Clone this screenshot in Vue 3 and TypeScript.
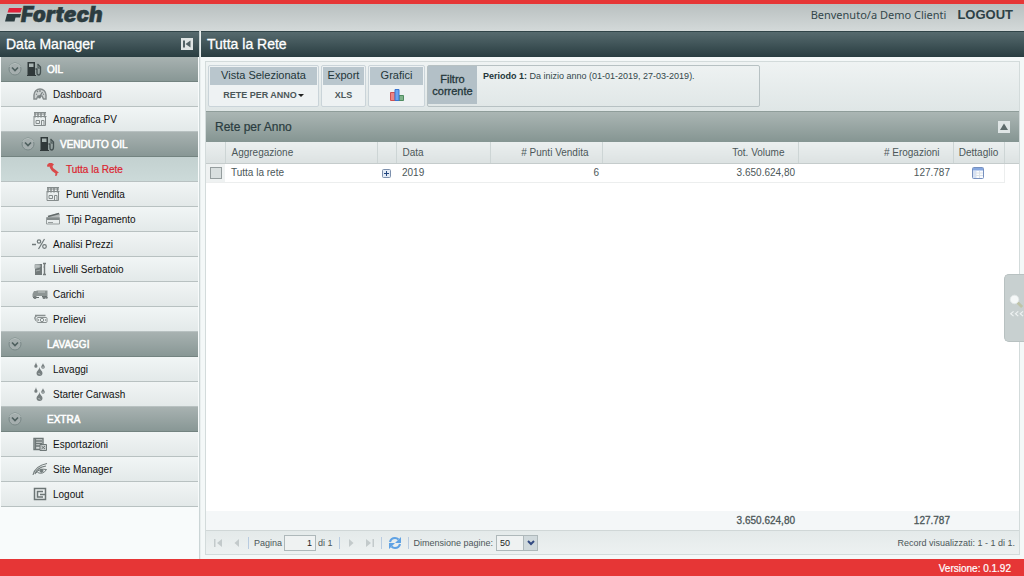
<script setup lang="ts">
import { ref } from 'vue'

interface MenuEntry {
  label: string
  icon?: string
  kind: 'group' | 'item'
  level: number
  active?: boolean
}

const menu: MenuEntry[] = [
  { label: 'OIL', icon: 'pump', kind: 'group', level: 0 },
  { label: 'Dashboard', icon: 'gauge', kind: 'item', level: 0 },
  { label: 'Anagrafica PV', icon: 'shop', kind: 'item', level: 0 },
  { label: 'VENDUTO OIL', icon: 'pump', kind: 'group', level: 1 },
  { label: 'Tutta la Rete', icon: 'italy', kind: 'item', level: 1, active: true },
  { label: 'Punti Vendita', icon: 'shop', kind: 'item', level: 1 },
  { label: 'Tipi Pagamento', icon: 'card', kind: 'item', level: 1 },
  { label: 'Analisi Prezzi', icon: 'percent', kind: 'item', level: 0 },
  { label: 'Livelli Serbatoio', icon: 'tank', kind: 'item', level: 0 },
  { label: 'Carichi', icon: 'truck', kind: 'item', level: 0 },
  { label: 'Prelievi', icon: 'money', kind: 'item', level: 0 },
  { label: 'LAVAGGI', kind: 'group', level: 0 },
  { label: 'Lavaggi', icon: 'drops', kind: 'item', level: 0 },
  { label: 'Starter Carwash', icon: 'drops', kind: 'item', level: 0 },
  { label: 'EXTRA', kind: 'group', level: 0 },
  { label: 'Esportazioni', icon: 'export', kind: 'item', level: 0 },
  { label: 'Site Manager', icon: 'eye', kind: 'item', level: 0 },
  { label: 'Logout', icon: 'exit', kind: 'item', level: 0 },
]

const page = ref('1')
const pageSize = ref('50')
const selected = ref(false)
</script>

<template>
  <div class="app">
    <header class="top">
      <svg class="logo" width="108" height="27" viewBox="0 0 108 27" role="img" aria-label="Fortech">
        <path d="M4 4H17L15.500 8.500H2.500Z" fill="#e0203a" />
        <path d="M2 10H16L15 13.500H10.500L9.500 17.500H0Z" fill="#2c3c40" />
        <text x="16" y="18" class="brand">Fortech</text>
      </svg>
      <span class="welcome">Benvenuto/a Demo Clienti</span>
      <a class="logout" href="#logout">LOGOUT</a>
    </header>

    <div class="body">
      <nav class="side" aria-label="Data Manager">
        <div class="bar side-bar">
          <h2>Data Manager</h2>
          <button class="tool" type="button" aria-label="Comprimi menu">
            <svg width="12" height="12" viewBox="0 0 12 12"><path d="M2 2.500H4V9.500H2ZM9.500 2.500V9.500L4.500 6Z" fill="#526367" /></svg>
          </button>
        </div>
        <ul class="menu">
          <li v-for="m in menu" :key="m.label">
            <a href="#" :class="['entry', m.kind, 'level' + m.level, { active: m.active }]">
              <svg v-if="m.kind === 'group'" class="chev" width="14" height="14" viewBox="0 0 14 14">
                <circle cx="7" cy="7" r="6" fill="#a5aeae" stroke="#798887" />
                <path d="M1.500 5A6 6 0 0 1 12.500 5" fill="none" stroke="#b4bebc" />
                <path d="M4 5.500L7 8.500L10 5.500" fill="none" stroke="#4f605f" stroke-width="1.700" />
              </svg>
              <span class="icon">
                <svg v-if="m.icon" width="16" height="16" viewBox="0 0 16 16">
                  <g v-if="m.icon === 'pump'">
                    <path d="M1.500 1H9V14H1.500Z" fill="#30393a" />
                    <path d="M3 2.500H7.500V6H3Z" fill="#a9b5b3" />
                    <path d="M1 14.500H10" stroke="#30393a" />
                    <path d="M9.500 8H11V12Q11 14 12.500 14Q14.500 14 14.500 11V6L11.500 3" fill="none" stroke="#445051" stroke-width="1.300" />
                    <path d="M12 4V7H14" fill="none" stroke="#445051" />
                  </g>
                  <g v-else-if="m.icon === 'gauge'">
                    <path d="M2 13V9A6 6 0 0 1 14 9V13H11.500L10 10H6L4.500 13Z" fill="#cdd2d2" stroke="#858c8d" stroke-width="1.500" />
                    <path d="M7.500 11L10.500 6M4 8L5 8.500M8 4V6M12 8L11 8.500M5 5L6 6" stroke="#777f80" stroke-width="1.200" />
                    <circle cx="7.500" cy="11" r="1.500" fill="#777f80" />
                  </g>
                  <g v-else-if="m.icon === 'shop'" fill="none" stroke="#858c8c">
                    <path d="M2 6V14.500H13.500V6M4 9.500H7.500V12.500H4ZM9.500 14V9.500H12V14" />
                    <path d="M2 1.500H14M1.500 5.500H14.500M2 3H14" />
                    <path d="M3 1V6.500M6 1V6.500M9 1V6.500M12.500 1V6.500" stroke-width="1.500" />
                  </g>
                  <path v-else-if="m.icon === 'italy'" d="M2 4L4 2L7 2L9 3.500L7.500 5L8 7L12 10L14 12L12.500 12L12 14.500L10 15L10.500 12.500L7 10L5 7L4.500 5.500L2.500 6Z" fill="#d94a4a" />
                  <g v-else-if="m.icon === 'card'">
                    <path d="M4 5L13 2L15 3L14.500 6H3Z" fill="#b4b9b9" />
                    <path d="M3 5.500L14 2.500M1 8H14.500" stroke="#626a6a" stroke-width="1.700" />
                    <path d="M1.500 6.500H14.500V13H1.500Z" fill="none" stroke="#969d9d" />
                    <path d="M3 11.500H8" stroke="#969d9d" />
                  </g>
                  <g v-else-if="m.icon === 'percent'" fill="none" stroke="#70797a">
                    <path d="M0 8.500H4" stroke-width="1.500" />
                    <circle cx="7" cy="5.500" r="1.700" stroke-width="1.200" /><circle cx="12.500" cy="10.500" r="1.800" stroke-width="1.200" />
                    <path d="M12.500 3L6.500 13" stroke-width="1.200" />
                  </g>
                  <g v-else-if="m.icon === 'tank'">
                    <path d="M3 3H10V14H3Z" fill="#727a7a" />
                    <path d="M3 3.500L8 4V6L3 7.500ZM4 10L8 9" fill="#b9bfbf" stroke="#a5adad" />
                    <path d="M11 2.500H14M12.500 2V14M11 13.500H14M11.500 6H13" stroke="#747b7b" stroke-width="1.400" />
                  </g>
                  <g v-else-if="m.icon === 'truck'">
                    <path d="M4.500 4.500H15.500V10H4.500ZM1 7L2 5H4.500V11H0.500V8Z" fill="#8d9594" />
                    <path d="M6 6H13" stroke="#c4cac9" />
                    <path d="M1 11.500H7M10 10.500H15" stroke="#626b6b" />
                    <circle cx="3" cy="11.500" r="1.500" fill="#737b7b" /><circle cx="12" cy="11.500" r="1.500" fill="#737b7b" /><circle cx="14.500" cy="11.500" r="1.300" fill="#737b7b" />
                  </g>
                  <g v-else-if="m.icon === 'money'" fill="none" stroke="#899090">
                    <path d="M3 4.500H13.500M3 6L5 4.500M3 6V8.500" stroke-width="1.400" /><rect x="5" y="6.500" width="10" height="5" rx="1" />
                    <circle cx="10" cy="9" r="1.700" /><path d="M6 9H7M13 9H14M3 9H4" stroke-width="1.400" />
                  </g>
                  <g v-else-if="m.icon === 'drops'" fill="#777f80">
                    <path d="M4 1C4 3 5.500 4 5.500 5.200A1.600 1.600 0 0 1 2.300 5.200C2.300 4 4 3 4 1ZM11 2C11 3.500 12.800 4.500 12.800 6A1.800 1.800 0 0 1 9.200 6C9.200 4.500 11 3.500 11 2ZM7.500 6C7.500 8.500 10.500 10 10.500 12A3 3 0 0 1 4.500 12C4.500 10 7.500 8.500 7.500 6Z" />
                    <path d="M6.500 12L8 13.500M11 5.500V7" stroke="#c7cdcd" />
                  </g>
                  <g v-else-if="m.icon === 'export'">
                    <path d="M2 2.500H11V13.500H2Z" fill="#d4d9d9" stroke="#6e7777" stroke-width="1.400" />
                    <path d="M3 5H10M3 7.500H10M3 10H9M3.500 2V13" stroke="#6e7777" stroke-width="1.300" />
                    <path d="M8 8.500H14.500V14.500H8Z" fill="#c6cccc" stroke="#6e7777" /><path d="M9.500 10L13 13M13 10L9.500 13" stroke="#6e7777" />
                  </g>
                  <g v-else-if="m.icon === 'eye'" fill="none" stroke="#727b7b">
                    <path d="M1 14Q3 5 15 2.500M3 13Q5 6.500 14 5" stroke-width="1.100" /><path d="M4 12Q7 7 14.500 8.500Q11 14 5.500 11.500" />
                    <circle cx="9.500" cy="9.800" r="1.500" fill="#727b7b" />
                  </g>
                  <g v-else-if="m.icon === 'exit'" fill="none" stroke="#6c7575">
                    <rect x="2.500" y="2.500" width="11" height="11" stroke-width="1.500" /><path d="M11 5.500H5.500V11H11M8 8.500H13" stroke-width="1.500" />
                  </g>
                </svg>
              </span>
              <span class="label">{{ m.label }}</span>
            </a>
          </li>
        </ul>
      </nav>

      <main class="main">
        <div class="bar"><h1>Tutta la Rete</h1></div>
        <div class="content">
          <div class="toolbar">
            <section class="box view">
              <h3>Vista Selezionata</h3>
              <button type="button">RETE PER ANNO<i class="caret"></i></button>
            </section>
            <section class="box export">
              <h3>Export</h3>
              <button type="button">XLS</button>
            </section>
            <section class="box charts">
              <h3>Grafici</h3>
              <button type="button" aria-label="Grafici">
                <svg width="16" height="14" viewBox="0 0 16 14">
                  <path d="M1.500 4.500H6V12.500H1.500Z" fill="#ec8585" stroke="#cf5151" />
                  <path d="M10 7.500H14.500V12.500H10Z" fill="#7fb48b" stroke="#4f8c60" />
                  <path d="M6 1.500H10V12.500H6Z" fill="#6ca4ee" stroke="#3975cf" />
                </svg>
              </button>
            </section>
            <section class="filter">
              <h3>Filtro corrente</h3>
              <p><b>Periodo 1:</b> Da inizio anno (01-01-2019, 27-03-2019).</p>
            </section>
          </div>

          <section class="grid">
            <div class="grid-head">
              <h2>Rete per Anno</h2>
              <button class="tool" type="button" aria-label="Comprimi pannello">
                <svg width="12" height="12" viewBox="0 0 12 12"><path d="M6 2.500L10 9H2Z" fill="#5d6b6b" /></svg>
              </button>
            </div>
            <div class="scroll">
              <table class="cols">
                <colgroup><col class="c-check"><col class="c-agg"><col class="c-plus"><col class="c-date"><col class="c-pts"><col><col class="c-erog"><col class="c-det"><col class="c-fill"></colgroup>
                <thead>
                  <tr><th></th><th>Aggregazione</th><th></th><th>Data</th><th class="num"># Punti Vendita</th><th class="num">Tot. Volume</th><th class="num"># Erogazioni</th><th class="mid">Dettaglio</th><th></th></tr>
                </thead>
                <tbody>
                  <tr>
                    <td class="check"><input v-model="selected" type="checkbox" aria-label="Seleziona Tutta la rete"></td>
                    <td>Tutta la rete</td>
                    <td class="mid">
                      <button class="bare" type="button" aria-label="Espandi">
                        <svg width="9" height="9" viewBox="0 0 9 9"><rect x=".5" y=".5" width="8" height="8" rx="1" fill="#e3ebf5" stroke="#7d90ad" /><path d="M2 4.500H7M4.500 2V7" stroke="#24477f" /></svg>
                      </button>
                    </td>
                    <td>2019</td><td class="num">6</td><td class="num">3.650.624,80</td><td class="num">127.787</td>
                    <td class="mid">
                      <button class="bare" type="button" aria-label="Dettaglio">
                        <svg width="12" height="12" viewBox="0 0 12 12"><rect x=".5" y=".5" width="11" height="11" rx="1" fill="#fafcff" stroke="#7690bf" /><path d="M1 1H11V3.500H1Z" fill="#86a7df" /><path d="M1 6H11M1 8.500H11M4 4V11M7.500 4V11" stroke="#dce2e7" /><path d="M1 4H4V11H1Z" fill="#d6e1f2" /></svg>
                      </button>
                    </td>
                    <td class="blank"></td>
                  </tr>
                </tbody>
              </table>
            </div>
            <table class="cols sums">
              <colgroup><col class="c-check"><col class="c-agg"><col class="c-plus"><col class="c-date"><col class="c-pts"><col><col class="c-erog"><col class="c-det"><col class="c-fill"></colgroup>
              <tbody><tr><td></td><td></td><td></td><td></td><td></td><td class="num">3.650.624,80</td><td class="num">127.787</td><td></td><td></td></tr></tbody>
            </table>
            <div class="pager">
              <button class="nav" type="button" aria-label="Prima pagina"><svg width="10" height="10" viewBox="0 0 10 10"><path d="M1 1H2.500V9H1ZM9 1V9L4 5Z" /></svg></button>
              <button class="nav prev" type="button" aria-label="Pagina precedente"><svg width="10" height="10" viewBox="0 0 10 10"><path d="M7 1V9L2.500 5Z" /></svg></button>
              <span class="sep"></span>
              <label for="page">Pagina</label>
              <input id="page" v-model="page" class="page" type="text">
              <span class="of">di 1</span>
              <span class="sep"></span>
              <button class="nav" type="button" aria-label="Pagina successiva"><svg width="10" height="10" viewBox="0 0 10 10"><path d="M3 1V9L7.500 5Z" /></svg></button>
              <button class="nav" type="button" aria-label="Ultima pagina"><svg width="10" height="10" viewBox="0 0 10 10"><path d="M1 1V9L6 5ZM7.500 1H9V9H7.500Z" /></svg></button>
              <span class="sep"></span>
              <button class="nav" type="button" aria-label="Aggiorna">
                <svg width="14" height="14" viewBox="0 0 14 14"><path d="M2 6Q3 2 7 2Q9 2 10.500 3.500M12 8Q11 12 7 12Q5 12 3.500 10.500" fill="none" stroke="#5fa2e4" stroke-width="2.200" /><path class="blue" d="M13 1V7H7ZM1 13V7H7Z" /></svg>
              </button>
              <span class="sep"></span>
              <label for="size">Dimensione pagine:</label>
              <div class="combo">
                <select id="size" v-model="pageSize"><option>50</option><option>100</option></select>
                <span class="arrow"><svg width="8" height="6" viewBox="0 0 8 6"><path d="M1 1L4 4L7 1" fill="none" stroke="#334b82" stroke-width="2" /></svg></span>
              </div>
              <span class="records">Record visualizzati: 1 - 1 di 1.</span>
            </div>
          </section>
        </div>
        <button class="search-tab" type="button" aria-label="Apri ricerca">
          <svg width="20" height="32" viewBox="0 0 20 32"><path d="M13 10L18 15" stroke="#bfc3a8" stroke-width="3" /><circle cx="10" cy="7" r="4.500" fill="#f5f8f8" stroke="#e2e7e7" /><path d="M9 19.500L6 22L9 24.500M14 19.500L11 22L14 24.500M19 19.500L16 22L19 24.500" fill="none" stroke="#eef2f2" stroke-width="1.200" /></svg>
        </button>
      </main>
    </div>
    <footer>Versione: 0.1.92</footer>
  </div>
</template>

<style>
body { margin: 0; }
</style>

<style scoped>
* { box-sizing: border-box; }
.app {
  min-height: 100vh;
  display: flex;
  flex-direction: column;
  font-family: "Liberation Sans", Arial, sans-serif;
  font-size: 10px;
  color: #4c5759;
  background: #f4f8f8;
}
h1, h2, h3, p, ul { margin: 0; padding: 0; font-weight: normal; }
button { font: inherit; color: inherit; padding: 0; border: 0; background: none; cursor: pointer; }
svg { display: block; }
a { text-decoration: none; color: inherit; }

.top {
  height: 31px;
  display: flex;
  padding: 0 11px 0 5px;
  border-top: 4px solid #e63636;
  background: linear-gradient(#b9c0c0, #d3d9d9);
  line-height: 22px;
}
.brand { font: italic 900 21px Inter, "Liberation Sans", sans-serif; fill: #2c3c40; stroke: #2c3c40; stroke-width: 0.500px; }
.welcome { margin-left: auto; font-family: "Noto Sans", sans-serif; font-size: 11px; color: #33474b; }
.logout { margin-left: 11px; font-size: 13px; font-weight: bold; color: #2d4146; }

.body { flex: 1; display: flex; }
.bar {
  height: 26px;
  display: flex;
  align-items: center;
  padding: 0 6px;
  border-top: 1px solid #304448;
  border-bottom: 1px solid #293d41;
  background: linear-gradient(#566a6e, #2b3f43);
  color: #fff;
}
.bar h1, .bar h2 { font-size: 14px; font-weight: normal; -webkit-text-stroke: 0.3px #fff; }
.tool {
  display: grid;
  place-items: center;
  width: 12px;
  height: 12px;
  margin-left: auto;
  background: #dfe5e5;
}

.side { width: 200px; flex: none; border-right: 1px solid #cbd5d6; background: #f8fbfb; }
.menu { list-style: none; padding: 0 1px; }
.entry {
  height: 25px;
  display: flex;
  align-items: center;
  padding-left: 31px;
  border-bottom: 1px solid #b8c1c1;
  background: linear-gradient(#f1f5f5, #e3e9e9);
  color: #111;
}
.entry.level1 { padding-left: 44px; }
.entry.active { background: linear-gradient(#c3d1d0, #ccdad9); color: #dc2430; -webkit-text-stroke: 0.2px #dc2430; }
.entry.group {
  padding-left: 7px;
  border-bottom-color: #738380;
  background: linear-gradient(#a8b2b1, #889795);
  color: #fff;
  -webkit-text-stroke: 0.5px #fff;
}
.entry.group.level1 { padding-left: 20px; }
.icon { width: 16px; height: 16px; margin-right: 5px; flex: none; }
.group .icon { margin-left: 4px; }

.main { flex: 1; min-width: 0; display: flex; flex-direction: column; position: relative; border-left: 1px solid #e9eeee; }
.content {
  flex: 1;
  display: flex;
  flex-direction: column;
  margin: 4px 4px;
  border: 1px solid #d3dbdb;
  background: #fff;
}
.toolbar {
  display: flex;
  gap: 2px;
  padding: 3px 2px 4px;
  background: linear-gradient(#eff3f3, #dfe6e6);
}
.box, .filter { height: 42px; border: 1px solid #cad4d9; border-radius: 2px; color: #33474b; }
.box { padding: 1px; text-align: center; background: #eef2f3; }
.box h3 { height: 18px; font-size: 11px; line-height: 17px; background: #b9c6cd; color: #23363a; }
.box button { width: 100%; height: 20px; display: flex; align-items: center; justify-content: center; font-size: 9px; font-weight: bold; color: #4b5759; }
.view { width: 111px; }
.export { width: 45px; }
.charts { width: 57px; }
.caret { border: 3px solid transparent; border-top-color: #222; border-bottom: 0; margin-left: 1px; }
.filter { width: 333px; display: flex; border-color: #b7c1c3; }
.filter h3 { width: 49px; height: 38px; display: flex; align-items: center; line-height: 12px; text-align: center; justify-content: center; background: #b3c0c7; color: #23363a; -webkit-text-stroke: 0.3px #23363a; font-size: 11px; }
.filter p { padding: 4px 6px; font-size: 9px; line-height: 12px; }
.filter b { color: #23363a; }

.grid { flex: 1; display: flex; flex-direction: column; }
.grid-head {
  height: 31px;
  display: flex;
  align-items: center;
  padding: 0 9px;
  border-top: 1px solid #8f9d9a;
  background: linear-gradient(#abb6b4, #859592);
  color: #2a3c40;
}
.grid-head h2 { font-size: 12px; -webkit-text-stroke: 0.2px #2a3c40; }
.scroll { flex: 1; }
.cols { width: 100%; border-collapse: collapse; table-layout: fixed; }
.c-check { width: 19px; }
.c-agg { width: 152px; }
.c-plus { width: 19px; }
.c-date { width: 94px; }
.c-pts { width: 112px; }
.c-erog { width: 155px; }
.c-det { width: 51px; }
.c-fill { width: 15px; }
.cols th, .cols td { height: 21px; padding: 0 3px 0 6px; font-weight: normal; text-align: left; white-space: nowrap; }
.cols th { border-right: 1px solid #cdd5d5; border-bottom: 1px solid #c5cccc; background: linear-gradient(#ebefef, #dce2e2); }
.cols th:last-child { border-right: 0; }
.cols th.num { padding-right: 13px; }
.cols .num { text-align: right; }
.cols .mid { padding: 0; text-align: center; }
.cols .check { padding: 0; background: #eff2f2; }
.scroll td { border-bottom: 1px solid #eceeee; }
.cols.cols tbody td { height: 19px; }
.scroll td.blank { border-bottom: 0; border-left: 1px solid #eceeee; }
.check input { appearance: none; display: block; width: 12px; height: 12px; margin: 0 auto; border: 1px solid #959d9e; background: #d9dfdf; }
.bare { vertical-align: middle; }
.bare svg { margin: 0 auto; }
.sums { background: #f4f7f8; }
.sums td { -webkit-text-stroke: 0.3px #4c5759; }

.pager {
  height: 24px;
  display: flex;
  align-items: center;
  padding: 0 4px 0 7px;
  border-top: 1px solid #d0d7d7;
  background: linear-gradient(#e4eaea, #edf1f1);
  font-size: 9px;
}
.nav path { fill: #c3cacb; }
.nav path[fill="none"] { fill: none; }
.nav path.blue { fill: #5fa2e4; }
.nav + .nav { margin-left: 9px; }
.sep { width: 1px; height: 12px; margin: 0 6px 0 6px; background: #b8cbe0; }
.sep + label { margin-left: -1px; }
.page { width: 32px; height: 16px; margin-left: 2px; padding: 0 3px; border: 1px solid #aeb8ba; background: #eff2f2; font: inherit; color: #222; text-align: right; }
.of { margin-left: 2px; }
.combo { position: relative; display: flex; margin-left: 3px; }
.combo select { appearance: none; width: 42px; height: 16px; padding: 0 3px; border: 1px solid #aeb8ba; border-radius: 0; background: #eff2f2; font: inherit; color: #222; }
.arrow { position: absolute; top: 1px; right: 1px; width: 14px; height: 14px; display: grid; place-items: center; background: #d0d9dc; border-left: 1px solid #aeb8ba; pointer-events: none; }
.records { margin-left: auto; }

.search-tab {
  position: absolute;
  right: 0;
  top: 243px;
  width: 20px;
  height: 68px;
  display: flex;
  align-items: center;
  border: 1px solid #b8c1c1;
  border-right: 0;
  border-radius: 5px 0 0 5px;
  background: #c8d0d0;
}
footer { height: 17px; padding-right: 13px; background: #e63636; color: #fff; font-size: 10px; line-height: 19px; text-align: right; -webkit-text-stroke: 0.2px #fff; }
</style>
